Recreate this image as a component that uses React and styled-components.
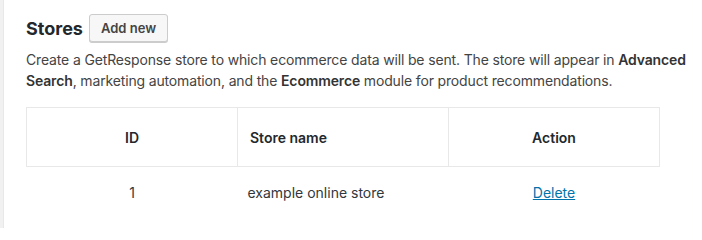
import React from 'react';
import styled, { createGlobalStyle } from 'styled-components';

const GlobalStyle = createGlobalStyle`
  html, body {
    margin: 0;
    padding: 0;
    background: #fff;
  }
  body {
    font-family: Inter, 'Liberation Sans', sans-serif;
    color: #444;
  }
`;

const Page = styled.div`
  min-height: 228px;
  box-sizing: border-box;
  border-left: 3px solid #f1f1f1;
  box-shadow: inset 1px 0 0 #e8e8e8;
  padding: 14px 10px 0 23px;
`;

const Header = styled.div`
  display: flex;
  align-items: center;
  gap: 6px;
`;

const Title = styled.h2`
  margin: 0;
  font-size: 18px;
  font-weight: 700;
  color: #23282d;
`;

const Button = styled.button`
  height: 28px;
  padding: 0 11px;
  font-family: inherit;
  font-size: 13px;
  font-weight: 600;
  color: #444;
  background: #f7f7f7;
  border: 1px solid #ccc;
  border-radius: 3px;
  box-shadow: 0 1px 0 #ccc;
  cursor: pointer;
`;

const Intro = styled.p`
  margin: 7px 0 0;
  font-size: 14px;
  line-height: 21px;
  color: #444;
  letter-spacing: -0.15px;
  b {
    font-weight: 600;
    color: #333;
  }
`;

const Table = styled.table`
  margin-top: 16px;
  width: 634px;
  border-collapse: collapse;
  table-layout: fixed;
  font-size: 14px;
`;

const Th = styled.th`
  height: 59px;
  box-sizing: border-box;
  border: 1px solid #e8e8e8;
  font-weight: 600;
  color: #23282d;
  text-align: ${p => p.$align || 'center'};
  padding: 0 12px;
`;

const Td = styled.td`
  height: 50px;
  color: #32373c;
  text-align: ${p => p.$align || 'center'};
  padding: 0 10px;
`;

const Link = styled.a`
  color: #0073aa;
  text-decoration: underline;
  cursor: pointer;
`;

const stores = [{ id: 1, name: 'example online store' }];

const App = () => {
  return (
    <>
      <GlobalStyle />
      <Page>
        <Header>
          <Title>Stores</Title>
          <Button>Add new</Button>
        </Header>
        <Intro>
          Create a GetResponse store to which ecommerce data will be sent. The store will appear in{' '}
          <b>Advanced</b> <b>Search</b>, marketing automation, and the <b>Ecommerce</b> module for
          product recommendations.
        </Intro>
        <Table>
          <thead>
            <tr>
              <Th>ID</Th>
              <Th $align="left">Store name</Th>
              <Th>Action</Th>
            </tr>
          </thead>
          <tbody>
            {stores.map(store => (
              <tr key={store.id}>
                <Td>{store.id}</Td>
                <Td $align="left">{store.name}</Td>
                <Td>
                  <Link>Delete</Link>
                </Td>
              </tr>
            ))}
          </tbody>
        </Table>
      </Page>
    </>
  );
};

export default App;
